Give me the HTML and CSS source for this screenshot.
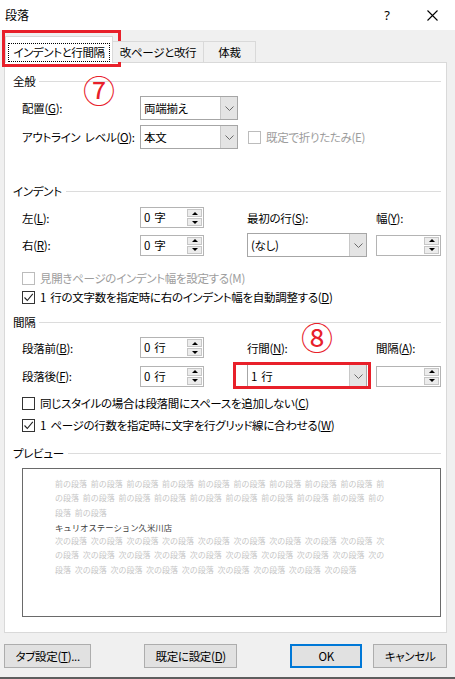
FILE: index.html
```html
<!DOCTYPE html>
<html lang="ja">
<head>
<meta charset="utf-8">
<title>段落</title>
<link rel="stylesheet" href="styles.css">
</head>
<body>
<div class="titlebar">
  <span class="title">段落</span>
  <span class="help">?</span>
  <span class="close"><svg width="11" height="11" viewBox="0 0 11 11"><path d="M0.5 0.5L10.5 10.5M10.5 0.5L0.5 10.5" stroke="#000" stroke-width="1.1" fill="none"/></svg></span>
</div>
<div class="body">
  <div class="tabs">
    <div class="tab active"><span class="focus">インデントと行間隔</span></div>
    <div class="tab t2">改ページと改行</div>
    <div class="tab t3">体裁</div>
  </div>
  <div class="panel">
    <div class="group-head gh1"><span>全般</span><i class="rule"></i></div>
    <div class="row g-r1">
      <span class="lbl">配置(<u>G</u>):</span>
      <div class="combo cw98"><span class="val">両端揃え</span><span class="drop"><svg width="9" height="5" viewBox="0 0 9 5"><path d="M0.5 0.5L4.5 4.5L8.5 0.5" fill="none" stroke="#6a6a6a"/></svg></span></div>
    </div>
    <div class="row g-r2">
      <span class="lbl">アウトライン レベル(<u>O</u>):</span>
      <div class="combo cw98"><span class="val">本文</span><span class="drop"><svg width="9" height="5" viewBox="0 0 9 5"><path d="M0.5 0.5L4.5 4.5L8.5 0.5" fill="none" stroke="#6a6a6a"/></svg></span></div>
      <div class="check disabled span2"><span class="box"></span><span class="ctext">既定で折りたたみ(E)</span></div>
    </div>

    <div class="group-head gh2"><span>インデント</span><i class="rule"></i></div>
    <div class="row i-r1">
      <span class="lbl">左(<u>L</u>):</span>
      <div class="spin sw64"><span class="val">0 字</span><span class="arrows"><i class="up"></i><i class="dn"></i></span></div>
      <span class="lbl">最初の行(<u>S</u>):</span>
      <span class="lbl">幅(<u>Y</u>):</span>
    </div>
    <div class="row i-r2">
      <span class="lbl">右(<u>R</u>):</span>
      <div class="spin sw64"><span class="val">0 字</span><span class="arrows"><i class="up"></i><i class="dn"></i></span></div>
      <div class="combo cw120"><span class="val">(なし)</span><span class="drop"><svg width="9" height="5" viewBox="0 0 9 5"><path d="M0.5 0.5L4.5 4.5L8.5 0.5" fill="none" stroke="#6a6a6a"/></svg></span></div>
      <div class="spin sw65"><span class="val"></span><span class="arrows"><i class="up"></i><i class="dn"></i></span></div>
    </div>
    <div class="check disabled c-r1"><span class="box"></span><span class="ctext">見開きページのインデント幅を設定する(M)</span></div>
    <div class="check c-r2"><span class="box checked"><svg width="11" height="11" viewBox="0 0 11 11"><path d="M1.5 5.5L4.3 8.5L9.8 1.8" fill="none" stroke="#222" stroke-width="1.1"/></svg></span><span class="ctext">1 行の文字数を指定時に右のインデント幅を自動調整する(<u>D</u>)</span></div>

    <div class="group-head gh3"><span>間隔</span><i class="rule"></i></div>
    <div class="row s-r1">
      <span class="lbl">段落前(<u>B</u>):</span>
      <div class="spin sw64"><span class="val">0 行</span><span class="arrows"><i class="up"></i><i class="dn"></i></span></div>
      <span class="lbl">行間(<u>N</u>):</span>
      <span class="lbl">間隔(<u>A</u>):</span>
    </div>
    <div class="row s-r2">
      <span class="lbl">段落後(<u>F</u>):</span>
      <div class="spin sw64"><span class="val">0 行</span><span class="arrows"><i class="up"></i><i class="dn"></i></span></div>
      <div class="combo cw120"><span class="val">1 行</span><span class="drop"><svg width="9" height="5" viewBox="0 0 9 5"><path d="M0.5 0.5L4.5 4.5L8.5 0.5" fill="none" stroke="#6a6a6a"/></svg></span></div>
      <div class="spin sw65"><span class="val"></span><span class="arrows"><i class="up"></i><i class="dn"></i></span></div>
    </div>
    <div class="check c-r3"><span class="box"></span><span class="ctext">同じスタイルの場合は段落間にスペースを追加しない(<u>C</u>)</span></div>
    <div class="check c-r4"><span class="box checked"><svg width="11" height="11" viewBox="0 0 11 11"><path d="M1.5 5.5L4.3 8.5L9.8 1.8" fill="none" stroke="#222" stroke-width="1.1"/></svg></span><span class="ctext">1 ページの行数を指定時に文字を行グリッド線に合わせる(<u>W</u>)</span></div>

    <div class="group-head gh4"><span>プレビュー</span><i class="rule"></i></div>
    <div class="preview">
      <div class="pl prev">前の段落 前の段落 前の段落 前の段落 前の段落 前の段落 前の段落 前の段落 前の段落 前</div>
      <div class="pl prev">の段落 前の段落 前の段落 前の段落 前の段落 前の段落 前の段落 前の段落 前の段落 前の</div>
      <div class="pl prev">段落 前の段落</div>
      <div class="pl cur">キュリオステーション久米川店</div>
      <div class="pl prev">次の段落 次の段落 次の段落 次の段落 次の段落 次の段落 次の段落 次の段落 次の段落 次</div>
      <div class="pl prev">の段落 次の段落 次の段落 次の段落 次の段落 次の段落 次の段落 次の段落 次の段落 次の</div>
      <div class="pl prev">段落 次の段落 次の段落 次の段落 次の段落 次の段落 次の段落 次の段落 次の段落</div>
    </div>
  </div>
  <div class="buttons">
    <button class="btn b-tab">タブ設定(<u>T</u>)...</button>
    <button class="btn b-def">既定に設定(<u>D</u>)</button>
    <button class="btn b-ok">OK</button>
    <button class="btn b-cancel">キャンセル</button>
  </div>
</div>
<div class="mark mark1"></div>
<div class="mark mark2"></div>
<span class="num num7">⑦</span>
<span class="num num8">⑧</span>
</body>
</html>
```

FILE: styles.css
```css
* { box-sizing: border-box; margin: 0; padding: 0; }
html, body { width: 455px; height: 679px; overflow: hidden; }
body {
  font-family: "Noto Sans CJK JP", "Noto Sans", sans-serif;
  font-size: 11.5px;
  letter-spacing: -0.3px;
  word-spacing: 2px;
  color: #000;
  background: #f0f0f0;
  font-feature-settings: "palt" 1;
  position: relative;
}
u { text-decoration: underline; text-underline-offset: 1px; text-decoration-thickness: 1px; }

.titlebar {
  height: 30px;
  background: #fff;
  display: flex;
  align-items: center;
  padding-left: 5px;
}
.title { font-size: 12px; line-height: 16px; letter-spacing: 0; }
.help { margin-left: auto; font-size: 13px; line-height: 16px; font-family: "Noto Sans", sans-serif; letter-spacing: 0; }
.close { margin-left: 37px; margin-right: 17px; display: flex; }

.body {
  height: 649px;
  padding: 0 8px 0 4px;
  border-bottom: 2px solid #5e5e5e;
}

.tabs {
  height: 32px;
  display: flex;
  align-items: flex-end;
  position: relative;
  z-index: 1;
}
.tab {
  height: 21px;
  border: 1px solid #d9d9d9;
  border-bottom: none;
  background: #f0f0f0;
  line-height: 20px;
  text-align: center;
  white-space: nowrap;
}
.tab.active {
  width: 108px;
  height: 27px;
  margin-left: 1px;
  margin-bottom: -1px;
  background: #fff;
  padding: 6px 2px 0 2px;
}
.focus {
  display: block;
  height: 19px;
  border: 1px dotted #000;
  line-height: 17px;
  letter-spacing: -0.4px;
}
.t2 { width: 92px; margin-left: -1px; }
.t3 { width: 53px; margin-left: -1px; }

.panel {
  height: 571px;
  background: #fff;
  border: 1px solid #d9d9d9;
  padding-right: 5px;
}

.group-head {
  height: 16px;
  display: flex;
  align-items: center;
  padding-left: 8px;
  line-height: 16px;
}
.rule { flex: 1; height: 1px; background: #dcdcdc; margin-left: 4px; }
.gh1 { margin-top: 10px; }
.gh2 { margin-top: 34px; }
.gh3 { margin-top: 9px; }
.gh4 { margin-top: 12px; }

.row {
  display: grid;
  grid-template-columns: 118px 107px 129px 65px;
  align-items: center;
  padding-left: 17px;
  line-height: 16px;
}
.g-r1 { margin-top: 7px; height: 24px; }
.g-r2 { margin-top: 5px; height: 24px; }
.i-r1 { margin-top: 8px; height: 21px; }
.i-r2 { margin-top: 5px; height: 24px; }
.s-r1 { margin-top: 7px; height: 21px; }
.s-r2 { margin-top: 6px; height: 24px; }
.span2 { grid-column: 3 / span 2; margin-left: 1px; }
.lbl { white-space: nowrap; }

.combo {
  height: 24px;
  border: 1px solid #a6a6a6;
  background: #fff;
  display: flex;
  align-items: stretch;
}
.cw98 { width: 98px; }
.cw120 { width: 120px; }
.combo .val { flex: 1; padding-left: 3px; line-height: 22px; white-space: nowrap; }
.drop {
  width: 17px;
  background: #e4e4e4;
  border-left: 1px solid #c8c8c8;
  display: flex;
  align-items: center;
  justify-content: center;
}

.spin {
  height: 21px;
  border: 1px solid #b4b4b4;
  background: #fff;
  display: flex;
  align-items: center;
}
.sw64 { width: 64px; }
.sw65 { width: 65px; }
.spin .val { flex: 1; padding-left: 3px; line-height: 19px; white-space: pre; }
.arrows {
  display: flex;
  flex-direction: column;
  gap: 1px;
  margin-right: 1px;
}
.arrows i {
  width: 15px;
  height: 8px;
  background: #ececec;
  border: 1px solid #c6c6c6;
  display: flex;
  align-items: center;
  justify-content: center;
}
.arrows i::after {
  content: "";
  width: 0;
  height: 0;
  border-left: 3px solid transparent;
  border-right: 3px solid transparent;
}
.arrows .up::after { border-bottom: 3px solid #000; }
.arrows .dn::after { border-top: 3px solid #000; }

.check {
  display: flex;
  align-items: center;
  height: 16px;
  line-height: 16px;
  white-space: nowrap;
}
.c-r1, .c-r2, .c-r3, .c-r4 { padding-left: 17px; }
.c-r1 { margin-top: 13px; }
.c-r2 { margin-top: 3px; }
.c-r3 { margin-top: 7px; }
.c-r4 { margin-top: 6px; }
.box {
  width: 13px;
  height: 13px;
  border: 1px solid #333;
  background: #fff;
  display: flex;
  align-items: center;
  justify-content: center;
  flex: none;
}
.ctext { margin-left: 5px; }
.check.disabled .box { border-color: #bcbcbc; }
.check.disabled .ctext { color: #9d9d9d; }

.preview {
  margin-top: 7px;
  margin-left: 17px;
  width: 419px;
  height: 149px;
  border: 1px solid #6a6a6a;
  background: #fff;
  padding: 8px 0 0 32px;
  font-feature-settings: normal;
  letter-spacing: 0;
}
.pl {
  font-size: 8px;
  line-height: 14.3px;
  white-space: pre;
  word-spacing: 1.9px;
}
.prev { color: #c6c6c6; }
.cur { color: #404040; font-size: 8.4px; }

.buttons {
  display: flex;
  margin-top: 11px;
}
.btn {
  height: 24px;
  background: #e1e1e1;
  border: 1px solid #adadad;
  font-family: inherit;
  font-size: 11.5px;
  letter-spacing: -0.3px;
  color: #000;
  line-height: 16px;
  font-feature-settings: "palt" 1;
}
.b-tab { width: 88px; }
.b-def { width: 93px; margin-left: 53px; }
.b-ok { width: 73px; margin-left: 53px; border: 2px solid #0078d7; }
.b-cancel { width: 74px; margin-left: 11px; }

.mark {
  position: absolute;
  border: 3px solid #e8202a;
}
.mark1 { left: 2px; top: 30px; width: 119px; height: 37px; }
.mark2 { left: 233px; top: 362px; width: 138px; height: 27px; }

.num {
  position: absolute;
  color: #e8202a;
  font-size: 32px;
  line-height: 32px;
  letter-spacing: 0;
  font-feature-settings: normal;
}
.num7 { left: 83px; top: 73px; }
.num8 { left: 301px; top: 320px; }
```
